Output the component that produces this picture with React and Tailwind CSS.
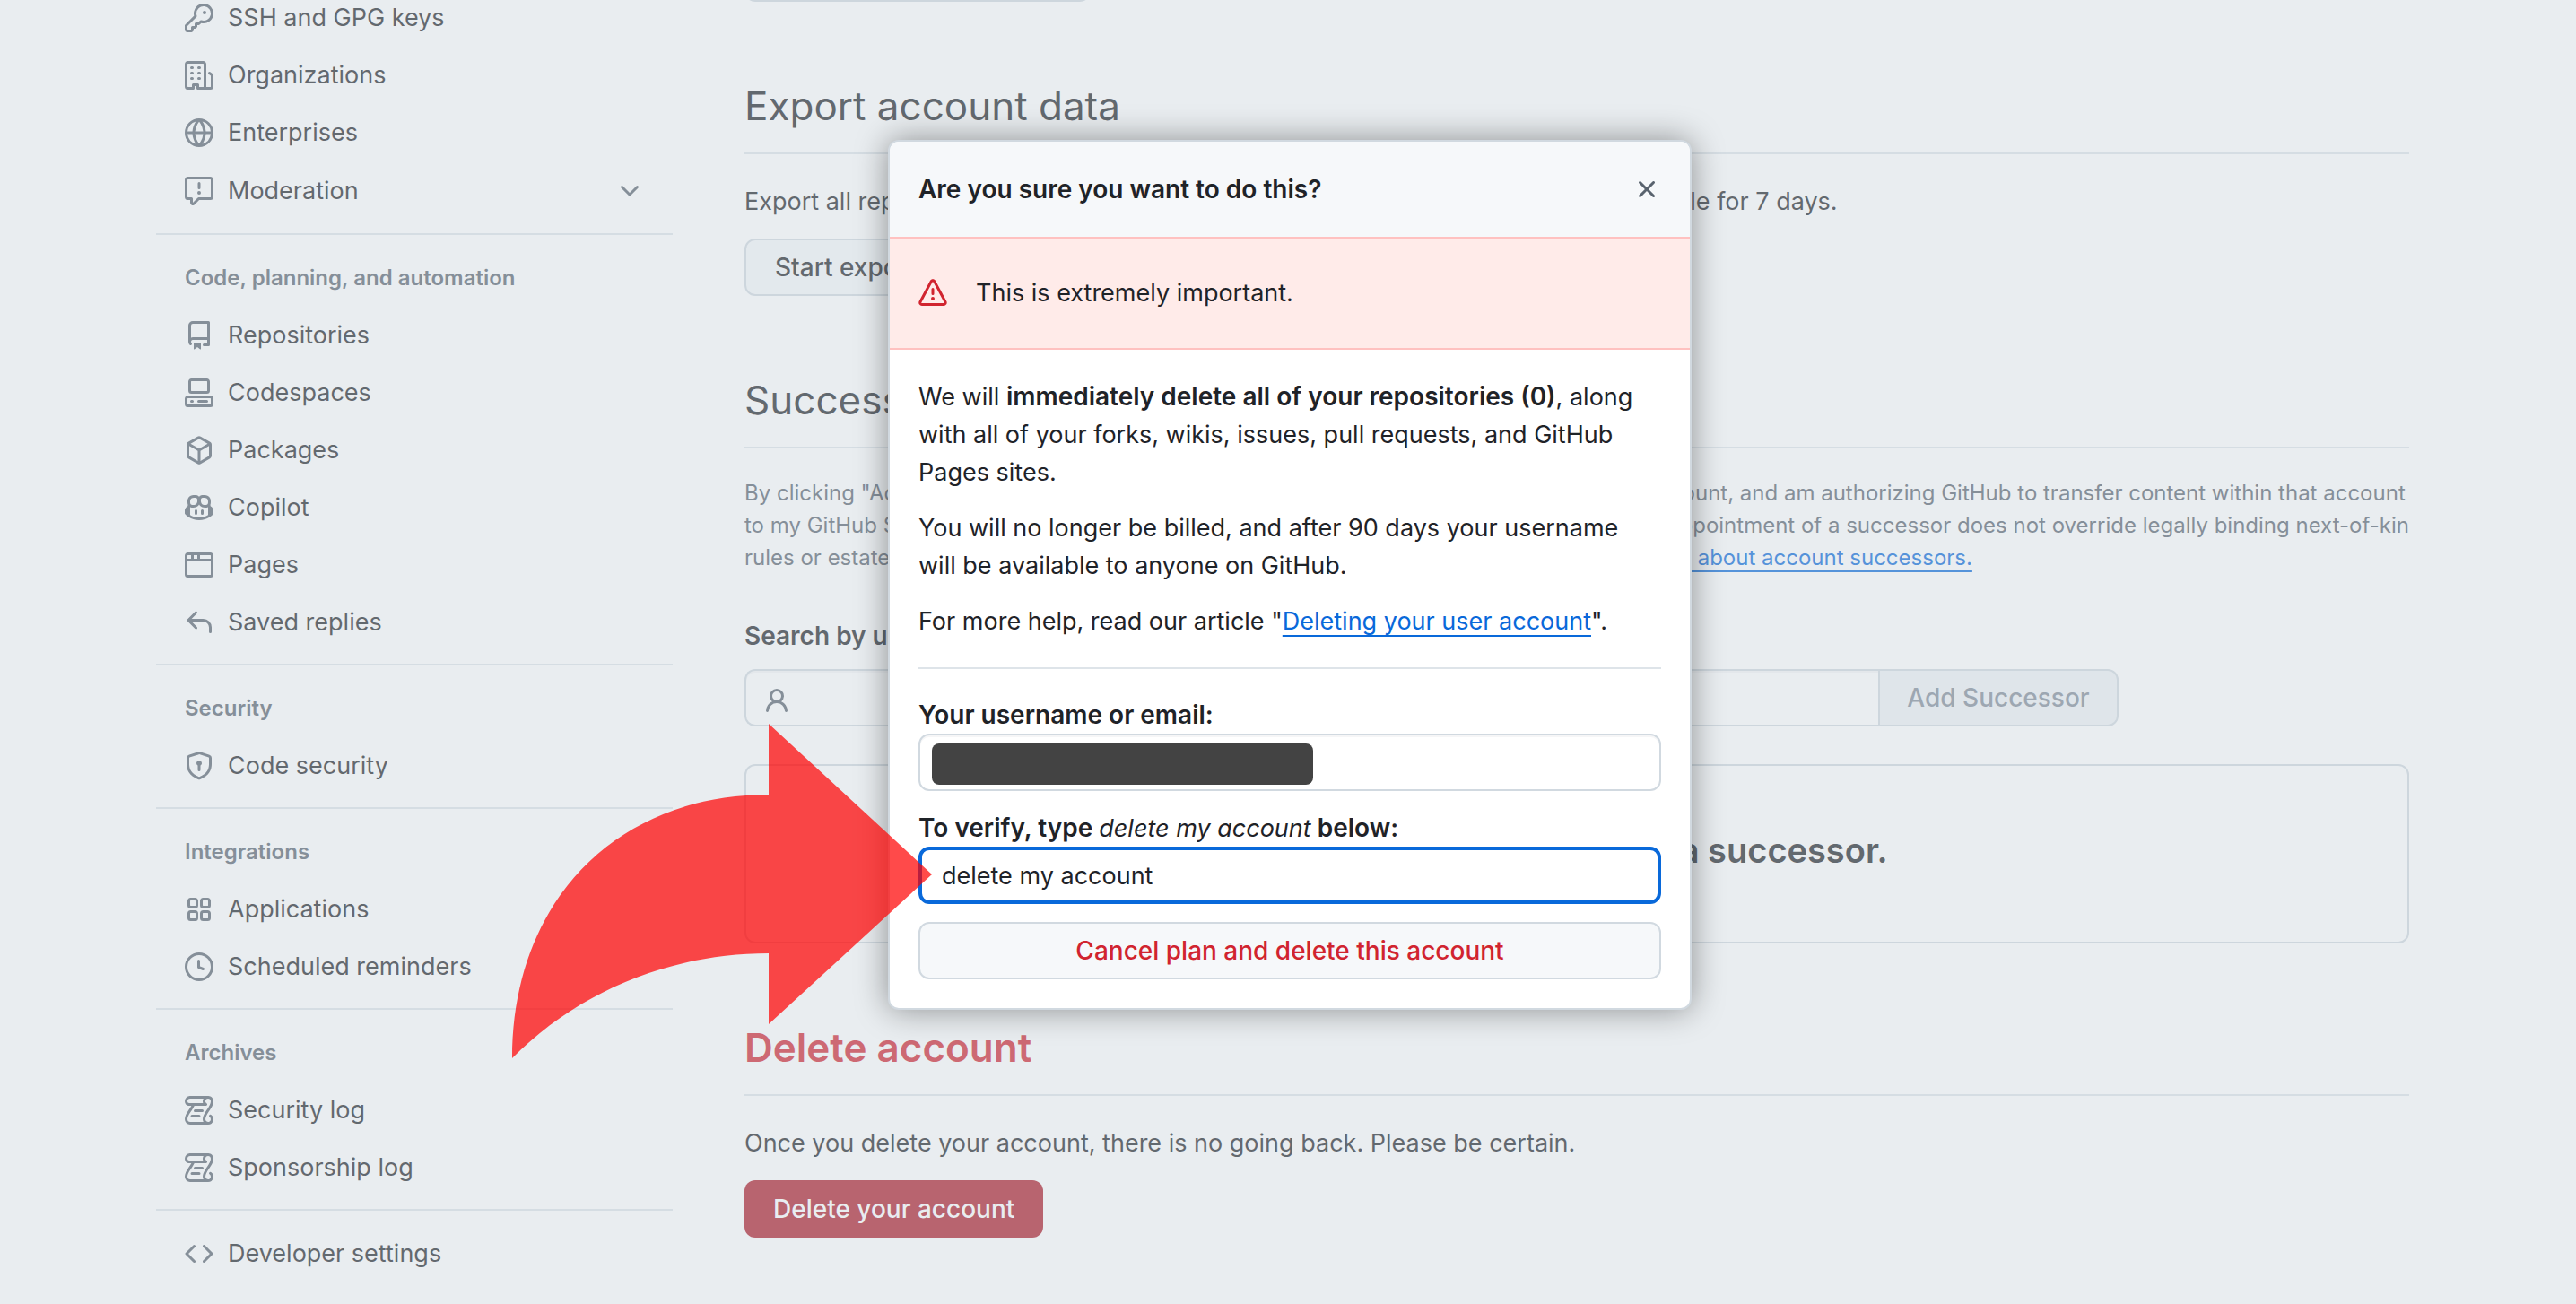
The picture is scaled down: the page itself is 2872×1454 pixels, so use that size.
import React, { useState } from 'react';

// 16px octicon paths, keyed by name
const ICONS = {
  key: 'M10.5 0a5.499 5.499 0 1 1-1.288 10.848l-.932.932a.749.749 0 0 1-.53.22H7v.75a.749.749 0 0 1-.22.53l-.5.5a.749.749 0 0 1-.53.22H5v.75a.749.749 0 0 1-.22.53l-.5.5a.749.749 0 0 1-.53.22h-2A1.75 1.75 0 0 1 0 14.25v-2c0-.199.079-.389.22-.53l4.932-4.932A5.5 5.5 0 0 1 10.5 0Zm-4 5.5c-.001.431.069.86.205 1.269a.75.75 0 0 1-.181.768L1.5 12.56v1.69c0 .138.112.25.25.25h1.69l.06-.06v-1.19a.75.75 0 0 1 .75-.75h1.19l.06-.06v-1.19a.75.75 0 0 1 .75-.75h1.19l1.023-1.025a.75.75 0 0 1 .768-.18A4 4 0 1 0 6.5 5.5ZM11 6a1 1 0 1 1 0-2 1 1 0 0 1 0 2Z',
  organization: 'M1.75 16A1.75 1.75 0 0 1 0 14.25V1.75C0 .784.784 0 1.75 0h8.5C11.216 0 12 .784 12 1.75v12.5c0 .085-.006.168-.018.25h2.268a.25.25 0 0 0 .25-.25V8.285a.25.25 0 0 0-.111-.208l-1.055-.703a.749.749 0 1 1 .832-1.248l1.055.703c.487.325.779.871.779 1.456v5.965A1.75 1.75 0 0 1 14.25 16h-3.5a.766.766 0 0 1-.197-.026c-.099.017-.2.026-.303.026h-3a.75.75 0 0 1-.75-.75V14h-1v1.25a.75.75 0 0 1-.75.75Zm-.25-1.75c0 .138.112.25.25.25H4v-1.25a.75.75 0 0 1 .75-.75h2.5a.75.75 0 0 1 .75.75v1.25h2.25a.25.25 0 0 0 .25-.25V1.75a.25.25 0 0 0-.25-.25h-8.5a.25.25 0 0 0-.25.25ZM3.75 6h.5a.75.75 0 0 1 0 1.5h-.5a.75.75 0 0 1 0-1.5ZM3 3.75A.75.75 0 0 1 3.75 3h.5a.75.75 0 0 1 0 1.5h-.5A.75.75 0 0 1 3 3.75Zm4 3A.75.75 0 0 1 7.75 6h.5a.75.75 0 0 1 0 1.5h-.5A.75.75 0 0 1 7 6.75ZM7.75 3h.5a.75.75 0 0 1 0 1.5h-.5a.75.75 0 0 1 0-1.5ZM3 9.75A.75.75 0 0 1 3.75 9h.5a.75.75 0 0 1 0 1.5h-.5A.75.75 0 0 1 3 9.75ZM7.75 9h.5a.75.75 0 0 1 0 1.5h-.5a.75.75 0 0 1 0-1.5Z',
  globe: 'M8 0a8 8 0 1 1 0 16A8 8 0 0 1 8 0ZM5.78 8.75a9.64 9.64 0 0 0 1.363 4.177c.255.426.542.832.857 1.215.245-.296.551-.705.857-1.215A9.64 9.64 0 0 0 10.22 8.75Zm4.44-1.5a9.64 9.64 0 0 0-1.363-4.177c-.307-.51-.612-.919-.857-1.215a9.927 9.927 0 0 0-.857 1.215A9.64 9.64 0 0 0 5.78 7.25Zm-5.944 1.5H1.543a6.507 6.507 0 0 0 4.666 5.5c-.123-.181-.24-.365-.352-.552-.715-1.192-1.437-2.874-1.581-4.948Zm-2.733-1.5h2.733c.144-2.074.866-3.756 1.58-4.948.12-.197.237-.381.353-.552a6.507 6.507 0 0 0-4.666 5.5Zm10.181 1.5c-.144 2.074-.866 3.756-1.58 4.948-.12.197-.237.381-.353.552a6.507 6.507 0 0 0 4.666-5.5Zm2.733-1.5a6.507 6.507 0 0 0-4.666-5.5c.123.181.24.365.353.552.714 1.192 1.436 2.874 1.58 4.948Z',
  report: 'M0 1.75C0 .784.784 0 1.75 0h12.5C15.216 0 16 .784 16 1.75v9.5A1.75 1.75 0 0 1 14.25 13H8.06l-2.573 2.573A1.458 1.458 0 0 1 3 14.543V13H1.75A1.75 1.75 0 0 1 0 11.25Zm1.75-.25a.25.25 0 0 0-.25.25v9.5c0 .138.112.25.25.25h2a.75.75 0 0 1 .75.75v2.19l2.72-2.72a.749.749 0 0 1 .53-.22h6.5a.25.25 0 0 0 .25-.25v-9.5a.25.25 0 0 0-.25-.25Zm7 2.25v2.5a.75.75 0 0 1-1.5 0v-2.5a.75.75 0 0 1 1.5 0ZM9 9a1 1 0 1 1-2 0 1 1 0 0 1 2 0Z',
  chevronDown: 'M12.78 5.22a.749.749 0 0 1 0 1.06l-4.25 4.25a.749.749 0 0 1-1.06 0L3.22 6.28a.749.749 0 1 1 1.06-1.06L8 8.939l3.72-3.719a.749.749 0 0 1 1.06 0Z',
  repo: 'M2 2.5A2.5 2.5 0 0 1 4.5 0h8.75a.75.75 0 0 1 .75.75v12.5a.75.75 0 0 1-.75.75h-2.5a.75.75 0 0 1 0-1.5h1.75v-2h-8a1 1 0 0 0-.714 1.7.75.75 0 1 1-1.072 1.05A2.495 2.495 0 0 1 2 11.5Zm10.5-1h-8a1 1 0 0 0-1 1v6.708A2.486 2.486 0 0 1 4.5 9h8ZM5 12.25a.25.25 0 0 1 .25-.25h3.5a.25.25 0 0 1 .25.25v3.25a.25.25 0 0 1-.4.2l-1.45-1.087a.249.249 0 0 0-.3 0L5.4 15.7a.25.25 0 0 1-.4-.2Z',
  codespaces: 'M0 11.25c0-.966.784-1.75 1.75-1.75h12.5c.966 0 1.75.784 1.75 1.75v3A1.75 1.75 0 0 1 14.25 16H1.75A1.75 1.75 0 0 1 0 14.25Zm2-9.5C2 .784 2.784 0 3.75 0h8.5C13.216 0 14 .784 14 1.75v5a1.75 1.75 0 0 1-1.75 1.75h-8.5A1.75 1.75 0 0 1 2 6.75Zm1.75-.25a.25.25 0 0 0-.25.25v5c0 .138.112.25.25.25h8.5a.25.25 0 0 0 .25-.25v-5a.25.25 0 0 0-.25-.25Zm-2 9.5a.25.25 0 0 0-.25.25v3c0 .138.112.25.25.25h12.5a.25.25 0 0 0 .25-.25v-3a.25.25 0 0 0-.25-.25ZM7 12.75a.75.75 0 0 1 .75-.75h4.5a.75.75 0 0 1 0 1.5h-4.5a.75.75 0 0 1-.75-.75Zm-4 0a.75.75 0 0 1 .75-.75h.5a.75.75 0 0 1 0 1.5h-.5a.75.75 0 0 1-.75-.75Z',
  package: 'm8.878.392 5.25 3.045c.54.314.872.89.872 1.514v6.098a1.75 1.75 0 0 1-.872 1.514l-5.25 3.045a1.75 1.75 0 0 1-1.756 0l-5.25-3.045A1.75 1.75 0 0 1 1 11.049V4.951c0-.624.332-1.201.872-1.514L7.122.392a1.75 1.75 0 0 1 1.756 0ZM7.875 1.69l-4.63 2.685L8 7.133l4.755-2.758-4.63-2.685a.248.248 0 0 0-.25 0ZM2.5 5.677v5.372c0 .09.047.171.125.216l4.625 2.683V8.432Zm6.25 8.271 4.625-2.683a.25.25 0 0 0 .125-.216V5.677L8.75 8.432Z',
  copilot: 'M7.998 15.035c-4.562 0-7.873-2.914-7.998-3.749V9.338c.085-.628.677-1.686 1.588-2.065.013-.07.024-.143.036-.218.029-.183.06-.384.126-.612-.201-.508-.254-1.084-.254-1.656 0-.87.128-1.769.693-2.484.579-.733 1.494-1.124 2.724-1.261 1.206-.134 2.262.034 2.944.765.05.053.096.108.139.165.044-.057.094-.112.143-.165.682-.731 1.738-.899 2.944-.765 1.23.137 2.145.528 2.724 1.261.566.715.693 1.614.693 2.484 0 .572-.053 1.148-.254 1.656.066.228.098.429.126.612.012.076.024.148.037.218.924.385 1.522 1.471 1.591 2.095v1.872c0 .766-3.351 3.795-8.002 3.795Zm0-1.485c2.28 0 4.584-1.11 5.002-1.433V7.862l-.023-.116c-.49.21-1.075.291-1.727.291-1.146 0-2.059-.327-2.71-.991A3.222 3.222 0 0 1 8 6.303a3.24 3.24 0 0 1-.544.743c-.65.664-1.563.991-2.71.991-.652 0-1.236-.081-1.727-.291l-.023.116v4.255c.419.323 2.722 1.433 5.002 1.433ZM6.762 2.83c-.193-.206-.637-.413-1.682-.297-1.019.113-1.479.404-1.713.7-.247.312-.369.789-.369 1.554 0 .793.129 1.171.308 1.371.162.181.519.379 1.442.379.853 0 1.339-.235 1.638-.54.315-.322.527-.827.617-1.553.117-.935-.037-1.395-.241-1.614Zm4.155-.297c-1.044-.116-1.488.091-1.681.297-.204.219-.359.679-.242 1.614.091.726.303 1.231.618 1.553.299.305.784.54 1.638.54.922 0 1.28-.198 1.442-.379.179-.2.308-.578.308-1.371 0-.765-.123-1.242-.37-1.554-.233-.296-.693-.587-1.713-.7ZM6.25 9.037a.75.75 0 0 1 .75.75v1.501a.75.75 0 0 1-1.5 0V9.787a.75.75 0 0 1 .75-.75Zm4.25.75v1.501a.75.75 0 0 1-1.5 0V9.787a.75.75 0 0 1 1.5 0Z',
  browser: 'M0 2.75C0 1.784.784 1 1.75 1h12.5c.966 0 1.75.784 1.75 1.75v10.5A1.75 1.75 0 0 1 14.25 15H1.75A1.75 1.75 0 0 1 0 13.25ZM14.5 6h-13v7.25c0 .138.112.25.25.25h12.5a.25.25 0 0 0 .25-.25Zm-6-3.5v2h6V2.75a.25.25 0 0 0-.25-.25ZM5 2.5v2h2v-2Zm-3.25 0a.25.25 0 0 0-.25.25V4.5h2v-2Z',
  reply: 'M6.78 1.97a.75.75 0 0 1 0 1.06L3.81 6h6.44A4.75 4.75 0 0 1 15 10.75v2.5a.75.75 0 0 1-1.5 0v-2.5a3.25 3.25 0 0 0-3.25-3.25H3.81l2.97 2.97a.749.749 0 0 1-.326 1.275.749.749 0 0 1-.734-.215L1.47 7.28a.75.75 0 0 1 0-1.06l4.25-4.25a.75.75 0 0 1 1.06 0Z',
  shieldLock: 'm8.533.133 5.25 1.68A1.75 1.75 0 0 1 15 3.48V7c0 1.566-.32 3.182-1.303 4.682-.983 1.498-2.585 2.813-5.032 3.855a1.697 1.697 0 0 1-1.33 0c-2.447-1.042-4.049-2.357-5.032-3.855C1.32 10.182 1 8.566 1 7V3.48a1.755 1.755 0 0 1 1.217-1.667l5.25-1.68a1.748 1.748 0 0 1 1.066 0Zm-.61 1.429.001.001-5.25 1.68a.251.251 0 0 0-.174.237V7c0 1.36.275 2.666 1.057 3.859.784 1.194 2.121 2.342 4.366 3.298a.196.196 0 0 0 .154 0c2.245-.957 3.582-2.103 4.366-3.297C13.225 9.666 13.5 8.358 13.5 7V3.48a.25.25 0 0 0-.174-.238l-5.25-1.68a.25.25 0 0 0-.153 0ZM9.5 6.5c0 .536-.286 1.032-.75 1.3v2.45a.75.75 0 0 1-1.5 0V7.8A1.5 1.5 0 1 1 9.5 6.5Z',
  apps: 'M1.5 3.25c0-.966.784-1.75 1.75-1.75h2.5c.966 0 1.75.784 1.75 1.75v2.5A1.75 1.75 0 0 1 5.75 7.5h-2.5A1.75 1.75 0 0 1 1.5 5.75Zm7 0c0-.966.784-1.75 1.75-1.75h2.5c.966 0 1.75.784 1.75 1.75v2.5a1.75 1.75 0 0 1-1.75 1.75h-2.5A1.75 1.75 0 0 1 8.5 5.75Zm-7 7c0-.966.784-1.75 1.75-1.75h2.5c.966 0 1.75.784 1.75 1.75v2.5a1.75 1.75 0 0 1-1.75 1.75h-2.5a1.75 1.75 0 0 1-1.75-1.75Zm7 0c0-.966.784-1.75 1.75-1.75h2.5c.966 0 1.75.784 1.75 1.75v2.5a1.75 1.75 0 0 1-1.75 1.75h-2.5a1.75 1.75 0 0 1-1.75-1.75ZM3.25 3a.25.25 0 0 0-.25.25v2.5c0 .138.112.25.25.25h2.5A.25.25 0 0 0 6 5.75v-2.5A.25.25 0 0 0 5.75 3Zm7 0a.25.25 0 0 0-.25.25v2.5c0 .138.112.25.25.25h2.5a.25.25 0 0 0 .25-.25v-2.5a.25.25 0 0 0-.25-.25Zm-7 7a.25.25 0 0 0-.25.25v2.5c0 .138.112.25.25.25h2.5a.25.25 0 0 0 .25-.25v-2.5a.25.25 0 0 0-.25-.25Zm7 0a.25.25 0 0 0-.25.25v2.5c0 .138.112.25.25.25h2.5a.25.25 0 0 0 .25-.25v-2.5a.25.25 0 0 0-.25-.25Z',
  clock: 'M8 0a8 8 0 1 1 0 16A8 8 0 0 1 8 0ZM1.5 8a6.5 6.5 0 1 0 13 0 6.5 6.5 0 0 0-13 0Zm7-3.25v2.992l2.028.812a.75.75 0 0 1-.557 1.392l-2.5-1A.751.751 0 0 1 7 8.25v-3.5a.75.75 0 0 1 1.5 0Z',
  log: 'M5 8.25a.75.75 0 0 1 .75-.75h4a.75.75 0 0 1 0 1.5h-4A.75.75 0 0 1 5 8.25ZM4 10.5A.75.75 0 0 0 4 12h4a.75.75 0 0 0 0-1.5H4Z M13-.005c1.654 0 3 1.328 3 3 0 .982-.338 1.933-.783 2.818-.443.879-1.028 1.758-1.582 2.588l-.011.017c-.568.853-1.104 1.659-1.501 2.446-.398.789-.623 1.494-.623 2.136a1.5 1.5 0 1 0 2.333-1.248.75.75 0 0 1 .834-1.246A3 3 0 0 1 13 16H3a3 3 0 0 1-3-3c0-1.582.891-3.135 1.777-4.506.209-.322.418-.637.623-.946.473-.709.923-1.386 1.287-2.048H2.51c-.576 0-1.381-.133-1.907-.783A2.68 2.68 0 0 1 0 2.995a3 3 0 0 1 3-3Zm0 1.5a1.5 1.5 0 0 0-1.5 1.5c0 .476.223.834.667 1.132A.75.75 0 0 1 11.75 5.5H5.368c-.467 1.003-1.141 2.015-1.773 2.963-.192.289-.381.571-.558.845C2.13 10.711 1.5 11.916 1.5 13A1.5 1.5 0 0 0 3 14.5h7.401A2.989 2.989 0 0 1 10 13c0-.979.338-1.928.784-2.812.441-.874 1.023-1.748 1.575-2.576l.017-.026c.568-.853 1.103-1.658 1.501-2.448.398-.79.623-1.497.623-2.143 0-.838-.669-1.5-1.5-1.5Zm-10 0a1.5 1.5 0 0 0-1.5 1.5c0 .321.1.569.27.778.097.12.325.227.74.227h7.674A2.737 2.737 0 0 1 10 2.995c0-.546.146-1.059.401-1.5Z',
  code: 'm11.28 3.22 4.25 4.25a.75.75 0 0 1 0 1.06l-4.25 4.25a.749.749 0 0 1-1.275-.326.749.749 0 0 1 .215-.734L13.94 8l-3.72-3.72a.749.749 0 0 1 .326-1.275.749.749 0 0 1 .734.215Zm-6.56 0a.751.751 0 0 1 1.042.018.751.751 0 0 1 .018 1.042L2.06 8l3.72 3.72a.749.749 0 0 1-.326 1.275.749.749 0 0 1-.734-.215L.47 8.53a.75.75 0 0 1 0-1.06Z',
  person: 'M10.561 8.073a6.005 6.005 0 0 1 3.432 5.142.75.75 0 1 1-1.498.07 4.5 4.5 0 0 0-8.99 0 .75.75 0 0 1-1.498-.07 6.004 6.004 0 0 1 3.431-5.142 3.999 3.999 0 1 1 5.123 0ZM10.5 5a2.5 2.5 0 1 0-5 0 2.5 2.5 0 0 0 5 0Z',
  alert: 'M6.457 1.047c.659-1.234 2.427-1.234 3.086 0l6.082 11.378A1.75 1.75 0 0 1 14.082 15H1.918a1.75 1.75 0 0 1-1.543-2.575Zm1.763.707a.25.25 0 0 0-.44 0L1.698 13.132a.25.25 0 0 0 .22.368h12.164a.25.25 0 0 0 .22-.368Zm.53 3.996v2.5a.75.75 0 0 1-1.5 0v-2.5a.75.75 0 0 1 1.5 0ZM9 11a1 1 0 1 1-2 0 1 1 0 0 1 2 0Z',
  x: 'M3.72 3.72a.75.75 0 0 1 1.06 0L8 6.94l3.22-3.22a.749.749 0 0 1 1.275.326.749.749 0 0 1-.215.734L9.06 8l3.22 3.22a.749.749 0 0 1-.326 1.275.749.749 0 0 1-.734-.215L8 9.06l-3.22 3.22a.751.751 0 0 1-1.042-.018.751.751 0 0 1-.018-1.042L6.94 8 3.72 4.78a.75.75 0 0 1 0-1.06Z',
};

const NAV = [
  {
    items: [
      { icon: 'key', label: 'SSH and GPG keys' },
      { icon: 'organization', label: 'Organizations' },
      { icon: 'globe', label: 'Enterprises' },
      { icon: 'report', label: 'Moderation', expandable: true },
    ],
  },
  {
    title: 'Code, planning, and automation',
    items: [
      { icon: 'repo', label: 'Repositories' },
      { icon: 'codespaces', label: 'Codespaces' },
      { icon: 'package', label: 'Packages' },
      { icon: 'copilot', label: 'Copilot' },
      { icon: 'browser', label: 'Pages' },
      { icon: 'reply', label: 'Saved replies' },
    ],
  },
  { title: 'Security', items: [{ icon: 'shieldLock', label: 'Code security' }] },
  {
    title: 'Integrations',
    items: [
      { icon: 'apps', label: 'Applications' },
      { icon: 'clock', label: 'Scheduled reminders' },
    ],
  },
  {
    title: 'Archives',
    items: [
      { icon: 'log', label: 'Security log' },
      { icon: 'log', label: 'Sponsorship log' },
    ],
  },
  { items: [{ icon: 'code', label: 'Developer settings' }] },
];

const Icon = ({ name, className = 'text-[#59636e]' }) => (
  <svg viewBox="0 0 16 16" fill="currentColor" aria-hidden="true" className={`size-8 shrink-0 ${className}`}>
    <path d={ICONS[name]} />
  </svg>
);

const Sidebar = () => (
  <nav className="-mt-3 w-[576px] shrink-0">
    {NAV.map((group, i) => (
      <div key={i} className={i > 0 ? 'mt-[14px] border-t-2 border-[#dee4e9] pt-4' : ''}>
        {group.title && (
          <h3 className="flex h-16 items-center px-8 text-[24px] font-semibold text-[#59636e]">{group.title}</h3>
        )}
        <ul>
          {group.items.map((item) =>
            item.expandable ? (
              <li key={item.label}>
                <button type="button" className="flex h-[66px] w-full items-center gap-4 px-8 text-left">
                  <Icon name={item.icon} />
                  <span className="flex-1">{item.label}</span>
                  <Icon name="chevronDown" />
                </button>
              </li>
            ) : (
              <li key={item.label}>
                <a href="#" className="flex h-16 items-center gap-4 px-8">
                  <Icon name={item.icon} />
                  {item.label}
                </a>
              </li>
            )
          )}
        </ul>
      </div>
    ))}
  </nav>
);

const SectionHeading = ({ children, danger }) => (
  <h2
    className={`mt-20 mb-8 border-b-2 border-[#dee4e9] pb-4 text-[44px] leading-[72px] ${
      danger ? 'font-semibold text-[#d1242f]' : 'font-normal'
    }`}
  >
    {children}
  </h2>
);

const Settings = () => (
  <main className="min-w-0 flex-1">
    {/* tail of the previous section's button */}
    <div className="-mt-[62px] h-16 w-[386px] rounded-xl border-2 border-[#d1d9e0] bg-[#f6f8fa]" />

    <SectionHeading>Export account data</SectionHeading>
    <p className="mb-5 whitespace-nowrap">
      Export all repositories and profile metadata for this account. Exports will be available for 7 days.
    </p>
    <button
      type="button"
      className="block h-16 rounded-xl border-2 border-[#d1d9e0] bg-[#f6f8fa] px-8 text-[28px] font-medium"
    >
      Start export
    </button>

    <SectionHeading>Successor settings</SectionHeading>
    <p className="text-[24px] leading-9 whitespace-nowrap text-[#59636e]">
      By clicking "Add Successor" below, I acknowledge that I am the owner of the @octo-cat account, and am authorizing
      GitHub to transfer content within that account
      <br />
      to my GitHub Successor, designated below, in the event of my death. I understand that the appointment of a
      successor does not override legally binding next-of-kin
      <br />
      rules or estate laws, and does not create a binding will or other legal instruments.{' '}
      <a href="#" className="text-[#0969da] underline decoration-2 underline-offset-[6px] [text-decoration-skip-ink:none]">
        Learn more about account successors.
      </a>
    </p>

    <label htmlFor="successor" className="mt-12 mb-4 block text-[28px] font-semibold">
      Search by username, full name, or email address
    </label>
    <div className="flex h-16 w-[1532px]">
      <div className="flex flex-1 items-center gap-3 rounded-l-xl border-2 border-r-0 border-[#d1d9e0] bg-white px-[18px] pt-2 shadow-[inset_0_2px_0_#1f23280a]">
        <Icon name="person" />
        <input id="successor" type="text" className="min-w-0 flex-1 bg-transparent outline-none" />
      </div>
      <button
        type="button"
        disabled
        className="w-[268px] rounded-r-xl border-2 border-[#d1d9e0] bg-[#eff2f5] text-[28px] font-medium whitespace-nowrap text-[#818b98]"
      >
        Add Successor
      </button>
    </div>

    <div className="mt-[42px] flex h-[200px] items-center justify-center rounded-xl border-2 border-[#d1d9e0] pb-2">
      <h3 className="text-[38px] font-semibold">You have not designated a successor.</h3>
    </div>

    <SectionHeading danger>Delete account</SectionHeading>
    <p className="mb-5">Once you delete your account, there is no going back. Please be certain.</p>
    <button type="button" className="block h-16 rounded-xl bg-[#ad1b28] px-8 text-[28px] font-medium text-white">
      Delete your account
    </button>
  </main>
);

const DeleteDialog = () => {
  const [verify, setVerify] = useState('delete my account');

  return (
    <div
      role="dialog"
      aria-labelledby="dialog-title"
      className="w-[896px] overflow-hidden rounded-xl border-2 border-[#d1d9e0] bg-white shadow-[0_0_36px_rgba(0,0,0,0.4)]"
    >
      <div className="flex items-center justify-between bg-[#f6f8fa] p-8">
        <h3 id="dialog-title" className="text-[28px] font-semibold">
          Are you sure you want to do this?
        </h3>
        <button type="button" aria-label="Close dialog">
          <Icon name="x" />
        </button>
      </div>

      <div className="flex items-center gap-8 border-y-2 border-[#ff818266] bg-[#ffebe9] px-8 py-10">
        <Icon name="alert" className="text-[#d1242f]" />
        This is extremely important.
      </div>

      <div className="p-8">
        <div className="flex flex-col gap-5 border-b-2 border-[#dee4e9] pb-[30px]">
          <p>
            We will{' '}
            <strong className="text-[28px] leading-none font-semibold">
              immediately delete all of your repositories (0)
            </strong>
            , along with all of your forks, wikis, issues, pull requests, and GitHub <br />
            Pages sites.
          </p>
          <p>
            You will no longer be billed, and after 90 days your username <br />
            will be available to anyone on GitHub.
          </p>
          <p>
            For more help, read our article "
            <a
              href="#"
              className="text-[#0969da] underline decoration-2 underline-offset-[6px] [text-decoration-skip-ink:none]"
            >
              Deleting your user account
            </a>
            ".
          </p>
        </div>

        <form className="pt-[30px]" onSubmit={(e) => e.preventDefault()}>
          <label htmlFor="login" className="block text-[28px] font-semibold">
            Your username or email:
          </label>
          <div className="relative mb-5">
            <input
              id="login"
              type="text"
              className="block h-16 w-full rounded-xl border-2 border-[#d1d9e0] px-6 shadow-[inset_0_2px_0_#1f23280a] outline-none"
            />
            {/* redacted value */}
            <span className="absolute top-[11px] left-[15px] h-[46px] w-[425px] rounded-lg bg-[#434343]" />
          </div>

          <label htmlFor="verify" className="block text-[28px] font-semibold">
            To verify, type <em className="text-[27px] leading-none font-normal">delete my account</em> below:
          </label>
          <input
            id="verify"
            type="text"
            value={verify}
            onChange={(e) => setVerify(e.target.value)}
            className="mb-5 block h-16 w-full rounded-xl border-4 border-[#0969da] px-[22px] outline-none"
          />

          <button
            type="submit"
            className="block h-16 w-full rounded-xl border-2 border-[#d1d9e0] bg-[#f6f8fa] text-[28px] font-medium text-[#d1242f]"
          >
            Cancel plan and delete this account
          </button>
        </form>
      </div>
    </div>
  );
};

const Arrow = () => (
  <svg
    viewBox="0 0 468 373"
    aria-hidden="true"
    className="pointer-events-none absolute top-[807px] left-[571px] h-[373px] w-[468px]"
  >
    <path d="M0 373C0 198 116 79 286 79V0L468 168 286 335V256C177 256 74 298 0 373Z" fill="#ff0000" fillOpacity="0.71" />
  </svg>
);

const App = () => (
  <div className="relative min-h-screen overflow-hidden bg-white font-['Inter','Liberation_Sans',sans-serif] text-[27px] leading-[42px] text-[#1f2328]">
    <div className="flex gap-20 pr-[186px] pl-[174px]">
      <Sidebar />
      <Settings />
    </div>

    <div className="absolute inset-0 flex items-start justify-center bg-[#c8d1da66] pt-[156px] pl-1">
      <DeleteDialog />
    </div>

    <Arrow />
  </div>
);

export default App;
